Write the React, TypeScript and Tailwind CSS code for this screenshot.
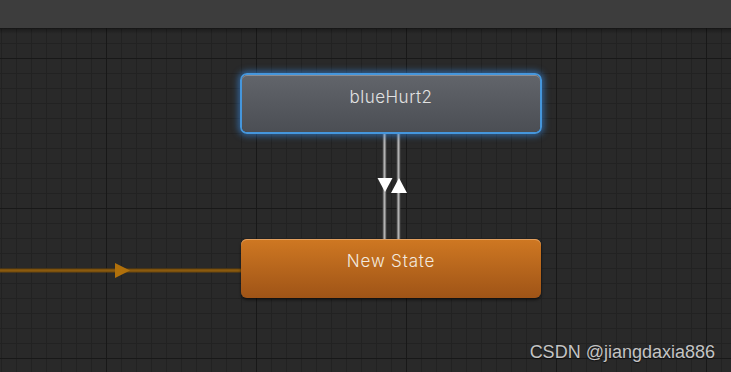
import React from 'react';

// Unity Animator: grid canvas with two states and their transitions
function GridBackground() {
  return (
    <svg className="absolute inset-0 w-full h-full" xmlns="http://www.w3.org/2000/svg">
      <defs>
        <pattern id="minor" x="1" y="0" width="15" height="15" patternUnits="userSpaceOnUse">
          <rect x="0" y="0" width="1" height="15" fill="#222222" />
          <rect x="0" y="0" width="15" height="1" fill="#222222" />
        </pattern>
        <pattern id="major" x="106" y="30" width="150" height="150" patternUnits="userSpaceOnUse">
          <rect x="0" y="0" width="1" height="150" fill="#181818" />
          <rect x="0" y="0" width="150" height="1" fill="#181818" />
        </pattern>
        <linearGradient id="topShade" x1="0" y1="0" x2="0" y2="1">
          <stop offset="0" stopColor="#000" stopOpacity="0.35" />
          <stop offset="1" stopColor="#000" stopOpacity="0" />
        </linearGradient>
      </defs>
      <rect width="100%" height="100%" fill="#292929" />
      <rect width="100%" height="100%" fill="url(#minor)" />
      <rect width="100%" height="100%" fill="url(#major)" />
      <rect width="100%" height="6" fill="url(#topShade)" />
    </svg>
  );
}

function Transitions() {
  return (
    <svg className="absolute inset-0 w-full h-full" xmlns="http://www.w3.org/2000/svg">
      {/* entry transition */}
      <line x1="0" y1="242.5" x2="242" y2="242.5" stroke="#6f480c" strokeWidth="4" />
      <line x1="0" y1="242.5" x2="242" y2="242.5" stroke="#8a5a0f" strokeWidth="2" />
      <polygon points="115,235 115,250 130,242.5" fill="#b0700b" />

      {/* state <-> state */}
      <line x1="384.5" y1="104" x2="384.5" y2="212" stroke="#6c6c6c" strokeWidth="3.5" />
      <line x1="384.5" y1="104" x2="384.5" y2="212" stroke="#b2b2b2" strokeWidth="1.5" />
      <line x1="398.5" y1="104" x2="398.5" y2="212" stroke="#6c6c6c" strokeWidth="3.5" />
      <line x1="398.5" y1="104" x2="398.5" y2="212" stroke="#b2b2b2" strokeWidth="1.5" />
      <polygon points="377.5,150 392.5,150 385,164" fill="#ffffff" />
      <polygon points="391,165 407,165 399,150" fill="#ffffff" />
    </svg>
  );
}

export default function App() {
  return (
    <div className="w-[731px] h-[372px] flex flex-col overflow-hidden bg-[#292929] font-['Inter','Noto_Sans',sans-serif]">
      <div className="h-[28px] shrink-0 bg-[#3d3d3d]" />
      <div className="relative flex-1">
        <GridBackground />
        <Transitions />

        <div className="absolute left-[240px] top-[45px] w-[302px] h-[61px] rounded-[7px] border-2 border-[#4596dc] shadow-[0_0_6px_2px_rgba(55,135,220,0.6)]">
          <div className="h-full rounded-[5px] bg-gradient-to-b from-[#62656b] to-[#4b4e54] shadow-[inset_0_1px_0_#8a8d93] pt-[11px] text-center text-[17px] leading-[22px] tracking-[0.5px] font-light text-[#e2e2e2]">
            blueHurt2
          </div>
        </div>

        <div className="absolute left-[241px] top-[211px] w-[300px] h-[59px] rounded-[6px] bg-gradient-to-b from-[#cf7822] to-[#9f5417] shadow-[inset_0_1px_0_#e3a060,0_2px_3px_rgba(0,0,0,0.55)] pt-[11px] text-center text-[17px] leading-[22px] tracking-[0.8px] font-light text-[#f3e9df]">
          New State
        </div>

        <div className="absolute right-[16px] bottom-[9px] text-[18px] leading-[22px] text-[#c4c4c4] font-['Liberation_Sans',sans-serif] [text-shadow:0_1px_1px_rgba(0,0,0,0.6)]">
          CSDN @jiangdaxia886
        </div>
      </div>
    </div>
  );
}
